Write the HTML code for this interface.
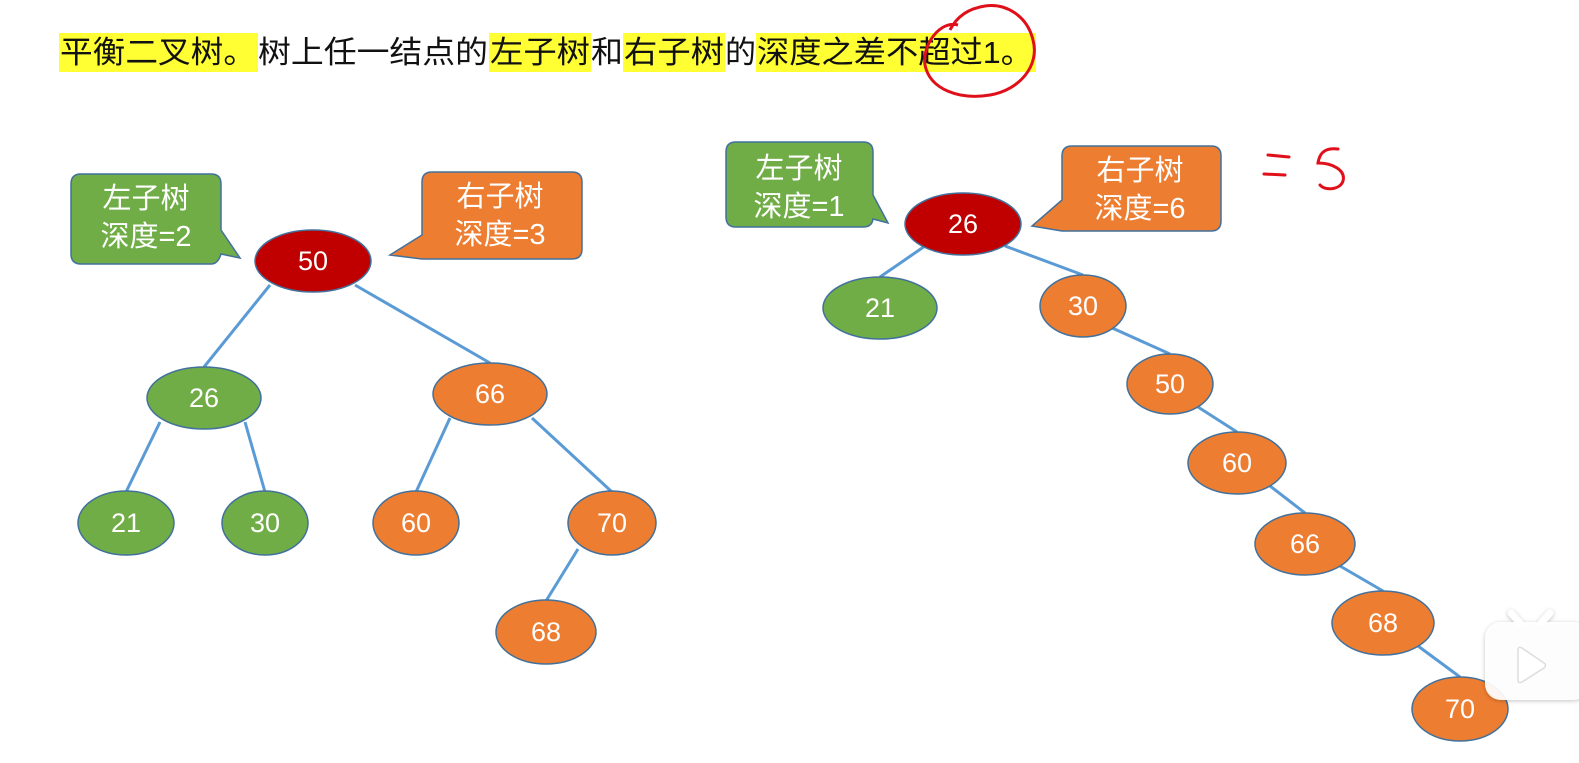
<!DOCTYPE html>
<html><head><meta charset="utf-8"><style>
html,body{margin:0;padding:0;background:#fff;width:1579px;height:763px;overflow:hidden}
svg{display:block}
text{font-family:"Liberation Sans","Noto Sans CJK SC",sans-serif}
</style></head><body>
<svg width="1579" height="763" viewBox="0 0 1579 763" xmlns="http://www.w3.org/2000/svg">
<g fill="#FFFF33">
<rect x="59" y="33" width="199" height="39"/>
<rect x="489" y="33" width="102" height="39"/>
<rect x="623" y="33" width="102" height="39"/>
<rect x="756" y="33" width="280" height="39"/>
</g>
<g font-size="31" fill="#111" font-family="'Noto Sans CJK SC',sans-serif">
<text x="60" y="63" textLength="196" lengthAdjust="spacingAndGlyphs">平衡二叉树。</text>
<text x="258" y="63" textLength="230" lengthAdjust="spacingAndGlyphs">树上任一结点的</text>
<text x="490" y="63" textLength="100" lengthAdjust="spacingAndGlyphs">左子树</text>
<text x="591" y="63" textLength="32" lengthAdjust="spacingAndGlyphs">和</text>
<text x="624" y="63" textLength="100" lengthAdjust="spacingAndGlyphs">右子树</text>
<text x="725" y="63" textLength="31" lengthAdjust="spacingAndGlyphs">的</text>
<text x="757" y="63" textLength="276" lengthAdjust="spacingAndGlyphs">深度之差不超过1。</text>
</g>
<path d="M958,25 C940,20 922,45 925,65 C930,90 960,100 990,95 C1020,90 1040,65 1033,40 C1027,15 1005,3 985,6 C965,9 955,20 950,30" fill="none" stroke="#E0101A" stroke-width="3"/>
<path d="M1268,155 L1289,157 M1264,174 L1285,175 M1338,149 C1328,148 1320,150 1318,163 C1332,163 1346,170 1343,181 C1340,190 1325,191 1320,185" fill="none" stroke="#E0101A" stroke-width="3" stroke-linecap="round"/>
<g stroke="#5B9BD5" stroke-width="3" fill="none">
<line x1="270" y1="285" x2="204" y2="367"/>
<line x1="355" y1="285" x2="490" y2="363"/>
<line x1="160" y1="422" x2="126" y2="492"/>
<line x1="245" y1="422" x2="265" y2="492"/>
<line x1="450" y1="418" x2="416" y2="492"/>
<line x1="532" y1="418" x2="612" y2="492"/>
<line x1="578" y1="549" x2="546" y2="601"/>
<line x1="925" y1="246" x2="880" y2="277"/>
<line x1="1005" y1="246" x2="1083" y2="275"/>
<line x1="1110" y1="327" x2="1170" y2="354"/>
<line x1="1198" y1="407" x2="1237" y2="432"/>
<line x1="1270" y1="486" x2="1305" y2="513"/>
<line x1="1340" y1="566" x2="1383" y2="591"/>
<line x1="1418" y1="646" x2="1460" y2="677"/>
</g>
<g stroke="#41719C" stroke-width="1.5">
<path d="M81,174 H211 Q221,174 221,184 V230 L240,258 L221,254 Q218,264 211,264 H81 Q71,264 71,254 V184 Q71,174 81,174Z" fill="#70AD47"/>
<path d="M432,172 H572 Q582,172 582,182 V249 Q582,259 572,259 H422 L390,255 L422,235 V182 Q422,172 432,172Z" fill="#ED7D31"/>
<path d="M736,142 H863 Q873,142 873,152 V195 L888,223 L873,219 Q872,227 863,227 H736 Q726,227 726,217 V152 Q726,142 736,142Z" fill="#70AD47"/>
<path d="M1072,146 H1211 Q1221,146 1221,156 V221 Q1221,231 1211,231 H1062 L1032,226 L1062,200 V156 Q1062,146 1072,146Z" fill="#ED7D31"/>
</g>
<g fill="#fff" font-size="29" font-family="'Noto Sans CJK SC',sans-serif">
<text x="146" y="208" text-anchor="middle">左子树</text>
<text x="146" y="246" text-anchor="middle">深度=2</text>
<text x="500" y="206" text-anchor="middle">右子树</text>
<text x="500" y="244" text-anchor="middle">深度=3</text>
<text x="799" y="178" text-anchor="middle">左子树</text>
<text x="799" y="216" text-anchor="middle">深度=1</text>
<text x="1140" y="180" text-anchor="middle">右子树</text>
<text x="1140" y="218" text-anchor="middle">深度=6</text>
</g>
<g stroke="#41719C" stroke-width="1.5">
<ellipse cx="313" cy="261" rx="58" ry="31" fill="#C00000"/>
<ellipse cx="204" cy="398" rx="57" ry="31" fill="#70AD47"/>
<ellipse cx="490" cy="394" rx="57" ry="31" fill="#ED7D31"/>
<ellipse cx="126" cy="523" rx="48" ry="32" fill="#70AD47"/>
<ellipse cx="265" cy="523" rx="43" ry="32" fill="#70AD47"/>
<ellipse cx="416" cy="523" rx="43" ry="32" fill="#ED7D31"/>
<ellipse cx="612" cy="523" rx="44" ry="32" fill="#ED7D31"/>
<ellipse cx="546" cy="632" rx="50" ry="32" fill="#ED7D31"/>
<ellipse cx="963" cy="224" rx="58" ry="31" fill="#C00000"/>
<ellipse cx="880" cy="308" rx="57" ry="31" fill="#70AD47"/>
<ellipse cx="1083" cy="306" rx="43" ry="31" fill="#ED7D31"/>
<ellipse cx="1170" cy="384" rx="43" ry="30" fill="#ED7D31"/>
<ellipse cx="1237" cy="463" rx="49" ry="31" fill="#ED7D31"/>
<ellipse cx="1305" cy="544" rx="50" ry="31" fill="#ED7D31"/>
<ellipse cx="1383" cy="623" rx="51" ry="32" fill="#ED7D31"/>
<ellipse cx="1460" cy="709" rx="48" ry="32" fill="#ED7D31"/>
</g>
<g fill="#fff" font-size="27" text-anchor="middle">
<text x="313" y="270">50</text>
<text x="204" y="407">26</text>
<text x="490" y="403">66</text>
<text x="126" y="532">21</text>
<text x="265" y="532">30</text>
<text x="416" y="532">60</text>
<text x="612" y="532">70</text>
<text x="546" y="641">68</text>
<text x="963" y="233">26</text>
<text x="880" y="317">21</text>
<text x="1083" y="315">30</text>
<text x="1170" y="393">50</text>
<text x="1237" y="472">60</text>
<text x="1305" y="553">66</text>
<text x="1383" y="632">68</text>
<text x="1460" y="718">70</text>
</g>
<defs><filter id="sh" x="-20%" y="-20%" width="140%" height="140%"><feDropShadow dx="0" dy="1" stdDeviation="2" flood-color="#000" flood-opacity="0.25"/></filter></defs>
<g filter="url(#sh)">
<line x1="1511" y1="613" x2="1520" y2="623" stroke="#fff" stroke-width="7" stroke-linecap="round"/>
<line x1="1550" y1="613" x2="1541" y2="623" stroke="#fff" stroke-width="7" stroke-linecap="round"/>
<rect x="1485" y="622" width="104" height="78" rx="16" fill="#fff" fill-opacity="0.92"/>
</g>
<path d="M1518,650 L1518,680 Q1518,684 1522,682 L1544,668 Q1547,665 1544,663 L1522,648 Q1518,646 1518,650Z" fill="#fff" stroke="#ddd" stroke-width="1.5"/>
</svg>
</body></html>
